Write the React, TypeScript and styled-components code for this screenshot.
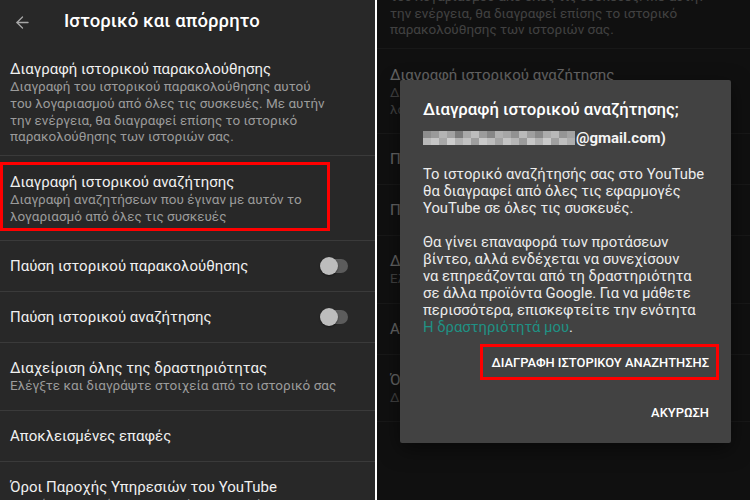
import React from "react";
import styled, { createGlobalStyle } from "styled-components";
import { ArrowLeft } from "lucide-react";

const GlobalStyle = createGlobalStyle`
  html, body {
    margin: 0;
    padding: 0;
    background: #ffffff;
  }
  body {
    font-family: Roboto, "Noto Sans", "DejaVu Sans", sans-serif;
    -webkit-font-smoothing: antialiased;
  }
`;

type Item = {
  title: string;
  lines?: string[];
  toggle?: boolean;
  highlight?: boolean;
  pt?: number;
  pb?: number;
};

const items: Item[] = [
  {
    title: "Διαγραφή ιστορικού παρακολούθησης",
    lines: [
      "Διαγραφή του ιστορικού παρακολούθησης αυτού",
      "του λογαριασμού από όλες τις συσκευές. Με αυτήν",
      "την ενέργεια, θα διαγραφεί επίσης το ιστορικό",
      "παρακολούθησης των ιστοριών σας.",
    ],
    pt: 16,
    pb: 10,
  },
  {
    title: "Διαγραφή ιστορικού αναζήτησης",
    lines: ["Διαγραφή αναζητήσεων που έγιναν με αυτόν το", "λογαριασμό από όλες τις συσκευές"],
    highlight: true,
    pt: 17,
    pb: 15,
  },
  { title: "Παύση ιστορικού παρακολούθησης", toggle: true },
  { title: "Παύση ιστορικού αναζήτησης", toggle: true },
  {
    title: "Διαχείριση όλης της δραστηριότητας",
    lines: ["Ελέγξτε και διαγράψτε στοιχεία από το ιστορικό σας"],
  },
  { title: "Αποκλεισμένες επαφές" },
  {
    title: "Όροι Παροχής Υπηρεσιών του YouTube",
    lines: ["Διαβάστε τους όρους παροχής υπηρεσιών"],
  },
];

// gray shades for the blurred-out e-mail address
const mosaic = [
  ["#8d8d8d", "#9a9a9a", "#b4b4b4", "#a2a2a2", "#7c7c7c", "#a9a9a9", "#bdbdbd", "#9c9c9c", "#878787", "#b0b0b0", "#a6a6a6", "#929292", "#bababa", "#9f9f9f", "#8a8a8a", "#acacac", "#b8b8b8", "#959595", "#a3a3a3"],
  ["#b9b9b9", "#c6c6c6", "#a8a8a8", "#cdcdcd", "#b2b2b2", "#c2c2c2", "#9e9e9e", "#c9c9c9", "#bcbcbc", "#a4a4a4", "#c4c4c4", "#b6b6b6", "#9b9b9b", "#c7c7c7", "#b1b1b1", "#cacaca", "#a0a0a0", "#bfbfbf", "#aeaeae"],
];

const Page = styled.div`
  display: flex;
  gap: 2px;
  width: 750px;
  height: 500px;
  overflow: hidden;
  background: #ffffff;
`;

const Panel = styled.div`
  position: relative;
  flex: 0 0 375px;
  height: 500px;
  overflow: hidden;
  background: #282828;
`;

const DimPanel = styled(Panel)`
  flex: 1 1 auto;
`;

const Screen = styled.div<{ $shift?: number; $inset?: number }>`
  margin-top: ${(p) => -(p.$shift ?? 0)}px;
  --inset: ${(p) => p.$inset ?? 10}px;
`;

const Header = styled.div`
  display: flex;
  align-items: center;
  gap: 32px;
  height: 44px;
  padding: 0 13px;
  color: #ffffff;
  svg {
    color: #a8a8a8;
    flex: none;
  }
`;

const Title = styled.div`
  font-size: 18.5px;
  font-weight: 500;
  letter-spacing: 0.1px;
  margin-top: -2px;
`;

const Row = styled.div<{ $pt?: number; $pb?: number }>`
  position: relative;
  display: flex;
  align-items: center;
  min-height: 51px;
  box-sizing: border-box;
  padding: ${(p) => p.$pt ?? 16}px 25px ${(p) => p.$pb ?? 16}px var(--inset);
  border-bottom: 1px solid #3a3a3a;
`;

const Texts = styled.div`
  flex: 1;
  min-width: 0;
`;

const RowTitle = styled.div`
  font-size: 15px;
  line-height: 18px;
  color: #f0f0f0;
  white-space: nowrap;
`;

const RowSub = styled.div`
  font-size: 13.5px;
  line-height: 16.8px;
  color: #9b9b9b;
  white-space: nowrap;
`;

const Highlight = styled.div`
  position: absolute;
  left: 0;
  top: 6px;
  width: 330px;
  height: 69px;
  box-sizing: border-box;
  border: 3px solid #ff0000;
  pointer-events: none;
`;

const Switch = styled.div`
  position: relative;
  flex: none;
  width: 30px;
  height: 18px;
  &::before {
    content: "";
    position: absolute;
    left: 6px;
    top: 2px;
    width: 22px;
    height: 14px;
    border-radius: 7px;
    background: #5c5c5c;
  }
  &::after {
    content: "";
    position: absolute;
    left: 0;
    top: 0;
    width: 18px;
    height: 18px;
    border-radius: 50%;
    background: #bdbdbd;
    box-shadow: 0 1px 2px rgba(0, 0, 0, 0.45);
  }
`;

const Scrim = styled.div`
  position: absolute;
  inset: 0;
  background: rgba(0, 0, 0, 0.58);
`;

const Dialog = styled.div`
  position: absolute;
  left: 23px;
  top: 80px;
  width: 331px;
  height: 363px;
  box-sizing: border-box;
  padding: 18px 12px 0 23px;
  background: #424242;
  border-radius: 2px;
  box-shadow: 0 6px 20px rgba(0, 0, 0, 0.5);
  display: flex;
  flex-direction: column;
`;

const DialogTitle = styled.div`
  font-size: 16.8px;
  line-height: 22px;
  font-weight: 500;
  color: #ffffff;
  white-space: nowrap;
`;

const Account = styled.div`
  display: flex;
  align-items: center;
  margin-top: 9px;
  height: 18px;
  font-size: 15px;
  font-weight: 700;
  color: #f4f4f4;
`;

const Mosaic = styled.div`
  display: grid;
  grid-template-columns: repeat(19, 8px);
  grid-template-rows: repeat(2, 7px);
  margin-right: 1px;
`;

const Cell = styled.span<{ $shade: string }>`
  background: ${(p) => p.$shade};
`;

const Body = styled.p`
  margin: 0;
  font-size: 14.8px;
  line-height: 17px;
  color: #ececec;
  white-space: nowrap;
`;

const FirstBody = styled(Body)`
  margin-top: 19px;
`;

const NextBody = styled(Body)`
  margin-top: 17px;
`;

const Link = styled.span`
  color: #1f9184;
`;

const Actions = styled.div`
  display: flex;
  flex-direction: column;
  align-items: flex-end;
  gap: 14px;
  margin-top: 8px;
`;

const Action = styled.div<{ $marked?: boolean }>`
  box-sizing: border-box;
  height: 36px;
  display: flex;
  align-items: center;
  padding: 0 7px 0 ${(p) => (p.$marked ? 8 : 0)}px;
  border: 3px solid ${(p) => (p.$marked ? "#ff0000" : "transparent")};
  font-size: 12.9px;
  font-weight: 500;
  color: #ffffff;
  white-space: nowrap;
`;

const Settings: React.FC<{ shift?: number; inset?: number; marks?: boolean }> = ({ shift, inset, marks }) => (
  <Screen $shift={shift} $inset={inset}>
    <Header>
      <ArrowLeft size={19} strokeWidth={1.6} />
      <Title>Ιστορικό και απόρρητο</Title>
    </Header>
    {items.map((it) => (
      <Row key={it.title} $pt={it.lines ? it.pt : 0} $pb={it.lines ? it.pb : 0}>
        {marks && it.highlight && <Highlight />}
        <Texts>
          <RowTitle>{it.title}</RowTitle>
          {it.lines?.map((l) => (
            <RowSub key={l}>{l}</RowSub>
          ))}
        </Texts>
        {it.toggle && <Switch />}
      </Row>
    ))}
  </Screen>
);

export default function App() {
  return (
    <>
      <GlobalStyle />
      <Page>
        <Panel>
          <Settings marks />
        </Panel>
        <DimPanel>
          <Settings shift={107} inset={13} />
          <Scrim />
          <Dialog>
            <DialogTitle>Διαγραφή ιστορικού αναζήτησης;</DialogTitle>
            <Account>
              <Mosaic>
                {mosaic.flatMap((row, r) =>
                  row.map((shade, c) => <Cell key={`${r}-${c}`} $shade={shade} />)
                )}
              </Mosaic>
              @gmail.com)
            </Account>
            <FirstBody>
              Το ιστορικό αναζήτησής σας στο YouTube
              <br />
              θα διαγραφεί από όλες τις εφαρμογές
              <br />
              YouTube σε όλες τις συσκευές.
            </FirstBody>
            <NextBody>
              Θα γίνει επαναφορά των προτάσεων
              <br />
              βίντεο, αλλά ενδέχεται να συνεχίσουν
              <br />
              να επηρεάζονται από τη δραστηριότητα
              <br />
              σε άλλα προϊόντα Google. Για να μάθετε
              <br />
              περισσότερα, επισκεφτείτε την ενότητα
              <br />
              <Link>Η δραστηριότητά μου</Link>.
            </NextBody>
            <Actions>
              <Action $marked>ΔΙΑΓΡΑΦΗ ΙΣΤΟΡΙΚΟΥ ΑΝΑΖΗΤΗΣΗΣ</Action>
              <Action>ΑΚΥΡΩΣΗ</Action>
            </Actions>
          </Dialog>
        </DimPanel>
      </Page>
    </>
  );
}
